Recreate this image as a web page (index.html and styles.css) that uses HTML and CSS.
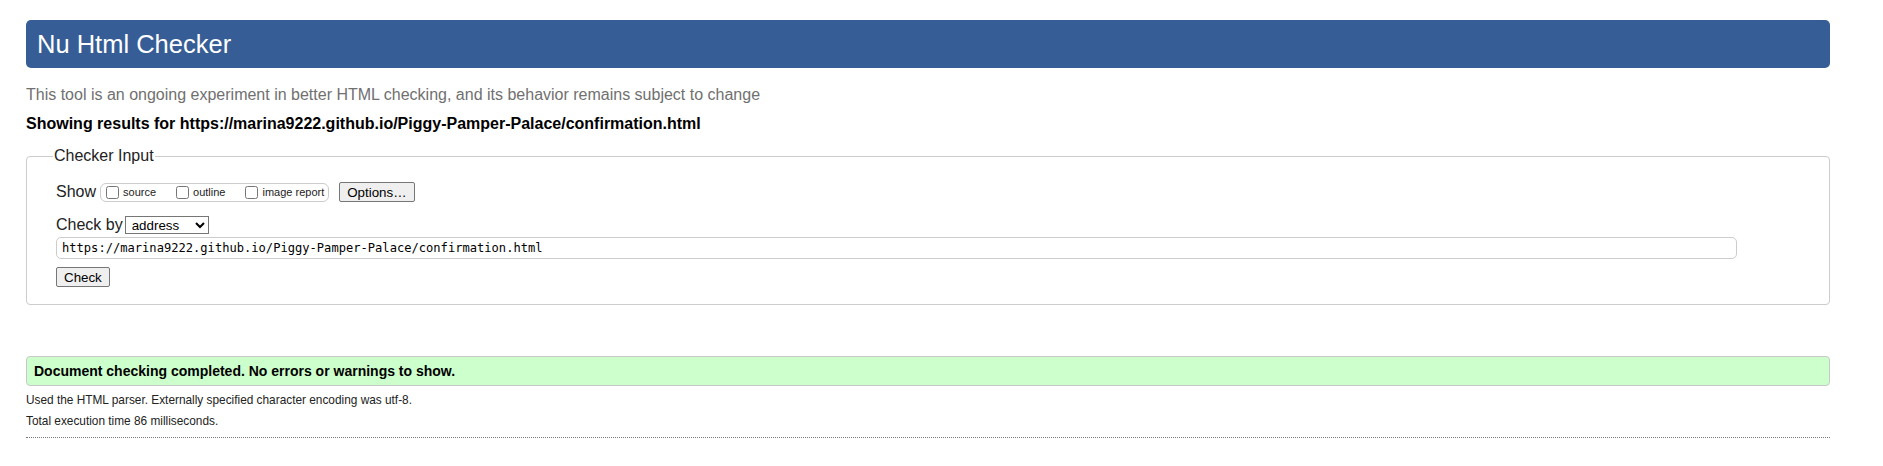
FILE: index.html
```html
<!DOCTYPE html>
<html lang="en">
<head>
<meta charset="utf-8">
<title>Nu Html Checker</title>
<link rel="stylesheet" href="styles.css">
</head>
<body>
<h1 class="masthead">Nu Html Checker</h1>
<p class="tagline">This tool is an ongoing experiment in better HTML checking, and its behavior remains subject to change</p>
<p class="results-for">Showing results for https://marina9222.github.io/Piggy-Pamper-Palace/confirmation.html</p>
<fieldset class="checker">
  <legend class="checker-legend">Checker Input</legend>
  <div class="row row-show">
    <span class="row-label">Show</span>
    <span class="show-box">
      <label class="opt opt-source"><input type="checkbox" class="cb">source</label>
      <label class="opt opt-outline"><input type="checkbox" class="cb">outline</label>
      <label class="opt opt-image"><input type="checkbox" class="cb">image report</label>
    </span>
    <button type="button" class="btn btn-options">Options…</button>
  </div>
  <div class="row row-checkby">
    <span class="row-label">Check by</span>
    <select class="sel">
      <option>address</option>
    </select>
  </div>
  <div class="row row-url">
    <input type="text" class="url" value="https://marina9222.github.io/Piggy-Pamper-Palace/confirmation.html">
  </div>
  <div class="row row-submit">
    <button type="button" class="btn btn-check">Check</button>
  </div>
</fieldset>
<p class="success">Document checking completed. No errors or warnings to show.</p>
<div class="details-block">
  <p class="details">Used the HTML parser. Externally specified character encoding was utf-8.</p>
  <p class="details">Total execution time 86 milliseconds.</p>
</div>
<hr class="dotted">
</body>
</html>
```

FILE: styles.css
```css
html, body {
  background: #ffffff;
}
body {
  margin: 0;
  padding: 20px 53px 0 26px;
  font-family: "Liberation Sans", Arial, sans-serif;
  color: #000;
}
.masthead {
  margin: 0;
  height: 48px;
  line-height: 48px;
  padding-left: 11px;
  background: #365d95;
  color: #ffffff;
  border-radius: 5px;
  font-size: 25.5px;
  font-weight: normal;
}
.tagline {
  margin: 17px 0 0;
  font-size: 16px;
  line-height: 20px;
  color: #707070;
}
.results-for {
  margin: 9px 0 0;
  font-size: 16px;
  line-height: 20px;
  font-weight: bold;
  color: #000;
}
.checker {
  margin: 13px 0 0;
  padding: 0 28px 17px 29px;
  border: 1px solid #cccccc;
  border-radius: 4px;
}
.checker-legend {
  margin-left: -3px;
  padding: 0 1px;
  font-size: 16px;
  line-height: 18px;
  color: #222;
}
.row {
  display: flex;
  align-items: center;
}
.row-label {
  font-size: 16px;
  line-height: 20px;
  color: #222;
}
.row-show {
  margin-top: 17px;
  height: 20px;
}
.show-box {
  display: inline-flex;
  align-items: center;
  height: 17px;
  margin-left: 4px;
  padding: 0 4px 0 5px;
  border: 1px solid #cccccc;
  border-radius: 6px;
}
.opt {
  display: inline-flex;
  align-items: center;
  font-size: 11px;
  color: #222;
}
.opt-outline, .opt-image {
  margin-left: 20px;
}
.cb {
  margin: 0 4px 0 0;
  width: 13px;
  height: 13px;
}
.btn {
  font-family: "Liberation Sans", Arial, sans-serif;
  font-size: 13.33px;
  height: 20px;
  padding: 0 7px;
  border: 1px solid #767676;
  border-radius: 2px;
  background: #efefef;
  color: #000;
}
.btn-options {
  margin-left: 10px;
}
.row-checkby {
  margin-top: 13px;
  height: 20px;
}
.sel {
  margin-left: 2px;
  width: 84px;
  height: 18px;
  font-family: "Liberation Sans", Arial, sans-serif;
  font-size: 13.33px;
  border: 1px solid #767676;
  border-radius: 0;
  background: #fff;
  color: #000;
  padding: 0 0 0 2px;
}
.row-url {
  margin-top: 2px;
}
.url {
  box-sizing: border-box;
  width: 1681px;
  height: 22px;
  margin: 0;
  padding: 0 5px;
  border: 1px solid #cccccc;
  border-radius: 5px;
  font-family: "DejaVu Sans Mono", "Liberation Mono", monospace;
  font-size: 12.1px;
  color: #000;
}
.row-submit {
  margin-top: 8px;
}
.success {
  margin: 51px 0 0;
  height: 28px;
  line-height: 28px;
  padding-left: 7px;
  background: #ccffcc;
  border: 1px solid #c8c8c8;
  border-radius: 4px;
  font-size: 14px;
  font-weight: bold;
  color: #000;
}
.details-block {
  margin-top: 4px;
}
.details {
  margin: 0;
  font-size: 11.85px;
  line-height: 21px;
  color: #222;
}
.dotted {
  margin: 5px 0 0;
  height: 0;
  border: 0;
  border-top: 1px dotted #777;
}
```
